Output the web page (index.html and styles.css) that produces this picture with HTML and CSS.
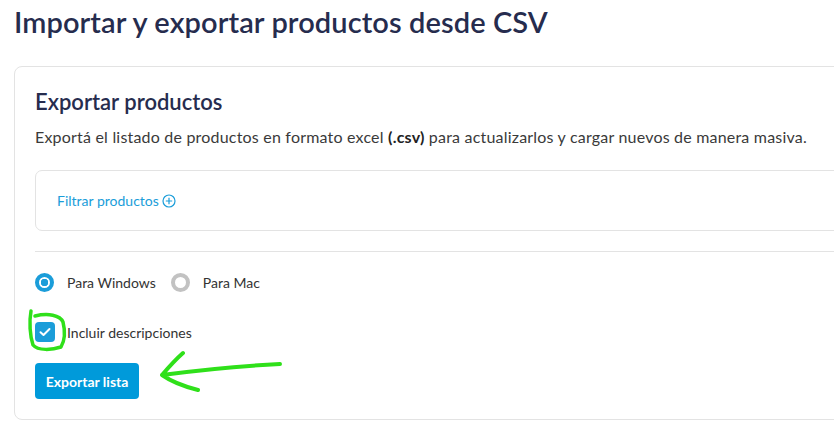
FILE: index.html
```html
<!DOCTYPE html>
<html lang="es">
<head>
<meta charset="utf-8">
<link rel="stylesheet" href="styles.css">
</head>
<body>
<h1 class="title">Importar y exportar productos desde CSV</h1>
<section class="card">
  <h2 class="card-title">Exportar productos</h2>
  <p class="desc">Exportá el listado de productos en formato excel <b>(.csv)</b> para actualizarlos y cargar nuevos de manera masiva.</p>
  <div class="filter-box">
    <span class="filter-link">Filtrar productos
      <svg class="plus" width="14" height="14" viewBox="0 0 14 14"><circle cx="7" cy="7" r="6" fill="none" stroke="currentColor" stroke-width="1.2"/><path d="M7 3.8v6.4M3.8 7h6.4" stroke="currentColor" stroke-width="1.2"/></svg>
    </span>
  </div>
  <hr class="divider">
  <div class="radios">
    <label class="radio"><span class="dot on"></span>Para Windows</label>
    <label class="radio"><span class="dot"></span>Para Mac</label>
  </div>
  <label class="check"><span class="box"><svg width="12" height="10" viewBox="0 0 12 10"><path d="M1.5 5.2l3 2.8 6-6" fill="none" stroke="#fff" stroke-width="2" stroke-linecap="round" stroke-linejoin="round"/></svg></span>Incluir descripciones</label>
  <button class="btn">Exportar lista</button>
</section>
<svg class="annot" width="834" height="428" viewBox="0 0 834 428">
  <path d="M31 311 C29 322 30 336 33 345 C38 351 52 350 61 347 C65 340 65 330 63 322 C60 315 48 313 35 316" fill="none" stroke="#2fe01a" stroke-width="3.5" stroke-linecap="round" stroke-linejoin="round"/>
  <path d="M280 364 C240 366 200 370 162 375 M183 353 C175 360 168 368 162 375 C172 382 186 387 198 390" fill="none" stroke="#2fe01a" stroke-width="4" stroke-linecap="round" stroke-linejoin="round"/>
</svg>
</body>
</html>
```
FILE: styles.css
```css
html, body {
  margin: 0;
  padding: 0;
  background: #fff;
  overflow: hidden;
  width: 834px;
  height: 428px;
}
body {
  font-family: Lato, "Open Sans", sans-serif;
  color: #2d3150;
  position: relative;
}
.title {
  margin: 0;
  padding: 4px 0 0 14px;
  font-size: 29px;
  line-height: 36px;
  font-weight: 600;
  color: #262c4e;
  letter-spacing: 0.1px;
}
.card {
  margin: 26px 0 0 14px;
  width: 900px;
  box-sizing: border-box;
  border: 1px solid #e3e3e3;
  border-radius: 8px;
  padding: 21px 21px 20px 20px;
  display: flex;
  flex-direction: column;
  align-items: flex-start;
}
.card-title {
  margin: 0;
  font-size: 22px;
  line-height: 28px;
  font-weight: 600;
  color: #262c4e;
}
.desc {
  margin: 11px 0 0;
  font-size: 16px;
  line-height: 20px;
  letter-spacing: 0.2px;
  color: #3a3a3a;
  white-space: nowrap;
}
.desc b { font-weight: 700; color: #222; }
.filter-box {
  margin-top: 23px;
  align-self: stretch;
  height: 61px;
  box-sizing: border-box;
  border: 1px solid #e3e3e3;
  border-radius: 7px;
  display: flex;
  align-items: center;
  padding-left: 21px;
}
.filter-link {
  color: #1a9dd9;
  font-size: 14px;
  display: inline-flex;
  align-items: center;
  gap: 3px;
}
.divider {
  margin: 20px 0 0;
  align-self: stretch;
  border: 0;
  border-top: 1px solid #e3e3e3;
}
.radios {
  margin-top: 20px;
  display: flex;
  gap: 15px;
  height: 20px;
  align-items: center;
}
.radio {
  display: inline-flex;
  align-items: center;
  gap: 13px;
  font-size: 14px;
  color: #333;
}
.dot {
  width: 19px;
  height: 19px;
  border-radius: 50%;
  box-sizing: border-box;
  border: 4px solid #c2c2c2;
  background: #fff;
}
.dot.on {
  border-color: #1b9dd9;
  background: radial-gradient(circle, #1b9dd9 0 3.5px, #fff 4px);
}
.check {
  margin-top: 30px;
  display: inline-flex;
  align-items: center;
  gap: 12px;
  font-size: 14px;
  color: #333;
  height: 20px;
}
.box {
  width: 20px;
  height: 20px;
  border-radius: 4px;
  background: #1b9dd9;
  display: flex;
  align-items: center;
  justify-content: center;
}
.btn {
  margin-top: 21px;
  width: 104px;
  height: 36px;
  border: 0;
  border-radius: 4px;
  background: #009ada;
  color: #fff;
  font-family: Lato, "Open Sans", sans-serif;
  font-weight: 700;
  font-size: 14px;
  padding: 0;
}
.annot {
  position: absolute;
  left: 0;
  top: 0;
  pointer-events: none;
}
```
